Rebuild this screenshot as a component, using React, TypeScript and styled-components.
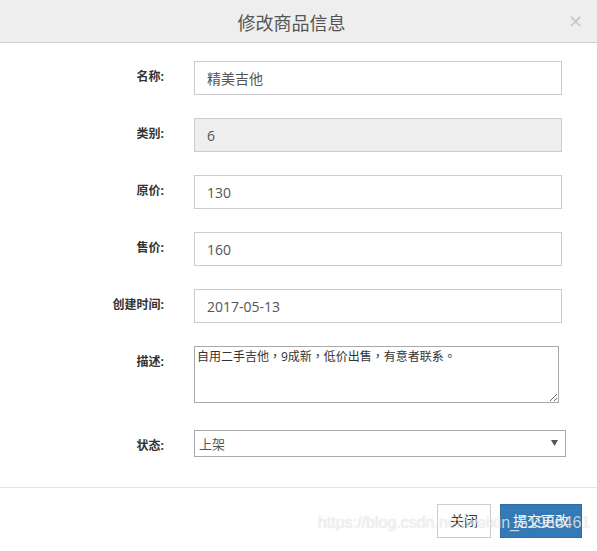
import React from 'react'
import styled, { createGlobalStyle } from 'styled-components'

const GlobalStyle = createGlobalStyle`
  html, body {
    margin: 0;
    padding: 0;
    background: #fff;
  }
  body {
    font-family: 'Open Sans', 'Noto Sans CJK SC', sans-serif;
    color: #333;
  }
`

const Modal = styled.div`
  position: relative;
  width: 597px;
  height: 551px;
  background: #fff;
  overflow: hidden;
`

const Header = styled.div`
  display: flex;
  align-items: flex-start;
  height: 43px;
  padding: 0 15px;
  box-sizing: border-box;
  background: #eeeeee;
  border-bottom: 1px solid #cfcfcf;
`

const Title = styled.h4`
  flex: 1;
  margin: 0;
  padding-top: 10px;
  font-size: 18px;
  line-height: 26px;
  font-weight: 400;
  color: #555;
  text-align: center;
`

const Close = styled.button`
  width: 14px;
  margin-top: 6px;
  padding: 0;
  border: 0;
  background: transparent;
  font-family: 'DejaVu Sans', sans-serif;
  font-size: 18px;
  font-weight: 400;
  line-height: 30px;
  color: #c4c4c4;
  cursor: pointer;
`

const Form = styled.form`
  display: flex;
  flex-direction: column;
  gap: 23px;
  padding: 18px 0 30px;
`

const Group = styled.div<{ $extra?: number }>`
  display: grid;
  grid-template-columns: 164px 1fr;
  column-gap: 30px;
  align-items: start;
  margin-top: ${({ $extra }) => ($extra ? `${$extra}px` : '0')};
`

const Label = styled.label`
  padding-top: 7px;
  font-size: 12px;
  line-height: 17px;
  font-weight: 700;
  color: #333;
  text-align: right;
`

const Input = styled.input<{ $readOnly?: boolean }>`
  width: 368px;
  height: 34px;
  box-sizing: border-box;
  padding: 6px 12px;
  border: 1px solid #ccc;
  border-radius: 0;
  background: ${({ $readOnly }) => ($readOnly ? '#eeeeee' : '#fff')};
  font-family: 'Open Sans', 'Noto Sans CJK SC', sans-serif;
  font-size: 14px;
  color: #555;
  outline: none;
`

const TextArea = styled.textarea`
  width: 365px;
  height: 57px;
  box-sizing: border-box;
  padding: 2px;
  border: 1px solid #a9a9a9;
  border-radius: 0;
  font-family: 'Open Sans', 'Noto Sans CJK TC', sans-serif;
  font-size: 12px;
  line-height: 16px;
  color: #333;
  outline: none;
`

const SelectWrap = styled.div`
  position: relative;
  width: 372px;
`

const Select = styled.select`
  appearance: none;
  width: 100%;
  height: 27px;
  box-sizing: border-box;
  padding: 0 20px 0 4px;
  border: 1px solid #a9a9a9;
  border-radius: 0;
  background: #fff;
  font-family: 'Open Sans', 'Noto Sans CJK SC', sans-serif;
  font-size: 13px;
  color: #555;
  outline: none;
`

const Caret = styled.svg`
  position: absolute;
  right: 8px;
  top: 10px;
  pointer-events: none;
`

const Footer = styled.div`
  display: flex;
  justify-content: flex-end;
  gap: 9px;
  padding: 16px 15px 14px;
  border-top: 1px solid #e5e5e5;
`

const Button = styled.button<{ $primary?: boolean }>`
  height: 34px;
  padding: 6px 12px;
  box-sizing: border-box;
  border: 1px solid ${({ $primary }) => ($primary ? '#2e6da4' : '#ccc')};
  border-radius: 0;
  background: ${({ $primary }) => ($primary ? '#337ab7' : '#fff')};
  color: ${({ $primary }) => ($primary ? '#fff' : '#333')};
  font-family: 'Open Sans', 'Noto Sans CJK SC', sans-serif;
  font-size: 14px;
  line-height: 20px;
  cursor: pointer;
`

// csdn watermark stamped over the bottom right corner
const Watermark = styled.div`
  position: absolute;
  left: 318px;
  top: 513px;
  font-family: 'Liberation Sans', Arial, sans-serif;
  font-size: 16px;
  line-height: 20px;
  color: rgba(255, 255, 255, 0.75);
  text-shadow: 0 0 1px rgba(0, 0, 0, 0.22);
  white-space: nowrap;
  pointer-events: none;
`

const fields = [
  { label: '名称:', value: '精美吉他' },
  { label: '类别:', value: '6', readOnly: true },
  { label: '原价:', value: '130' },
  { label: '售价:', value: '160' },
  { label: '创建时间:', value: '2017-05-13' }
]

export default function App() {
  return (
    <>
      <GlobalStyle />
      <Modal>
        <Header>
          <Title>修改商品信息</Title>
          <Close type="button">×</Close>
        </Header>
        <Form onSubmit={(e) => e.preventDefault()}>
          {fields.map((f) => (
            <Group key={f.label}>
              <Label>{f.label}</Label>
              <Input defaultValue={f.value} readOnly={f.readOnly} $readOnly={f.readOnly} />
            </Group>
          ))}
          <Group>
            <Label>描述:</Label>
            <TextArea defaultValue="自用二手吉他，9成新，低价出售，有意者联系。" />
          </Group>
          <Group $extra={4}>
            <Label>状态:</Label>
            <SelectWrap>
              <Select defaultValue="1">
                <option value="1">上架</option>
                <option value="0">下架</option>
              </Select>
              <Caret width="7" height="6" viewBox="0 0 7 6">
                <path d="M0 0h7L3.5 6z" fill="#555" />
              </Caret>
            </SelectWrap>
          </Group>
        </Form>
        <Footer>
          <Button type="button">关闭</Button>
          <Button type="button" $primary>
            提交更改
          </Button>
        </Footer>
        <Watermark>https://blog.csdn.net/weixin_51966461</Watermark>
      </Modal>
    </>
  )
}
